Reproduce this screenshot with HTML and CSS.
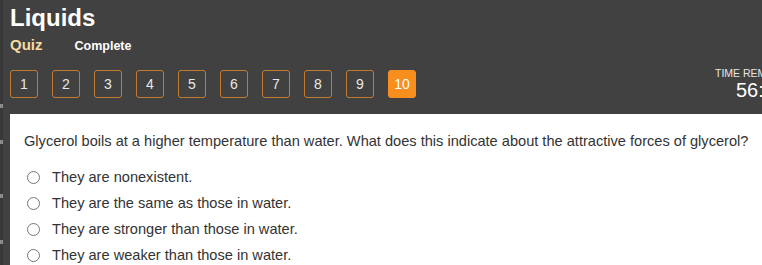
FILE: index.html
```html
<!DOCTYPE html>
<html lang="en">
<head>
    <meta charset="UTF-8">
    <title>Liquids - Quiz</title>
    <link rel="stylesheet" href="styles.css">
</head>
<body>
    <div class="edge">
        <span class="tick t1"></span>
        <span class="tick t2"></span>
        <span class="tick t3"></span>
        <span class="tick t4"></span>
    </div>
    <div class="page">
        <div class="header">
            <h1>Liquids</h1>
            <div class="subtitle">
                <span class="kind">Quiz</span>
                <span class="status">Complete</span>
            </div>
        </div>

        <div class="nav">
            <div class="questions">
                <button class="q-btn">1</button>
                <button class="q-btn">2</button>
                <button class="q-btn">3</button>
                <button class="q-btn">4</button>
                <button class="q-btn">5</button>
                <button class="q-btn">6</button>
                <button class="q-btn">7</button>
                <button class="q-btn">8</button>
                <button class="q-btn">9</button>
                <button class="q-btn active">10</button>
            </div>
            <div class="timer">
                <div class="timer-label">TIME REMAINING</div>
                <div class="timer-value">56:12</div>
            </div>
        </div>

        <div class="panel">
            <p class="question">Glycerol boils at a higher temperature than water. What does this indicate about the attractive forces of glycerol?</p>
            <ul class="answers">
                <li><span class="radio"></span>They are nonexistent.</li>
                <li><span class="radio"></span>They are the same as those in water.</li>
                <li><span class="radio"></span>They are stronger than those in water.</li>
                <li><span class="radio"></span>They are weaker than those in water.</li>
            </ul>
        </div>
    </div>
</body>
</html>
```

FILE: styles.css
```css
html, body {
    margin: 0;
    padding: 0;
    height: 100%;
    overflow: hidden;
}
body {
    background-color: #414141;
    font-family: "Liberation Sans", Arial, sans-serif;
    position: relative;
}
.edge {
    position: absolute;
    left: 0;
    top: 0;
    bottom: 0;
    width: 3px;
    background: #383838;
}
.tick {
    position: absolute;
    left: 0;
    width: 3px;
    height: 4px;
    background: #8a8a8a;
}
.t1 { top: 104px; }
.t2 { top: 140px; }
.t3 { top: 194px; }
.t4 { top: 240px; }
.page {
    padding-left: 10px;
    width: 800px;
}
.header h1 {
    margin: 0;
    padding-top: 4px;
    font-size: 24px;
    line-height: 27px;
    color: #ffffff;
    font-weight: bold;
}
.subtitle {
    margin-top: 5px;
    height: 20px;
    display: flex;
    align-items: baseline;
}
.kind {
    color: #f6dca3;
    font-weight: bold;
    font-size: 15px;
}
.status {
    color: #ffffff;
    font-weight: bold;
    font-size: 12.5px;
    margin-left: 32px;
}
.nav {
    display: flex;
    justify-content: space-between;
    margin-top: 14px;
    height: 44px;
}
.questions {
    display: flex;
    gap: 14px;
}
.q-btn {
    width: 28px;
    height: 28px;
    padding: 0;
    border: 1px solid #c07d32;
    border-radius: 3px;
    background: transparent;
    color: #e8e8e8;
    font-family: "Liberation Sans", Arial, sans-serif;
    font-size: 14px;
}
.q-btn.active {
    background: #f78e1e;
    border-color: #f78e1e;
    color: #ffffff;
}
.timer {
    margin-top: -3px;
    width: 95px;
    text-align: left;
}
.timer-label {
    color: #e6e6e6;
    font-size: 10.5px;
    line-height: 12px;
}
.timer-value {
    color: #ffffff;
    font-size: 20px;
    line-height: 22px;
    padding-left: 21px;
}
.panel {
    background: #ffffff;
    padding: 18px 14px 10px;
    height: 200px;
}
.question {
    margin: 0;
    font-size: 14.6px;
    line-height: 18px;
    color: #333333;
}
.answers {
    list-style: none;
    margin: 14px 0 0;
    padding: 0 0 0 3px;
}
.answers li {
    display: flex;
    align-items: center;
    height: 26px;
    font-size: 14.6px;
    color: #333333;
}
.radio {
    width: 11px;
    height: 11px;
    border: 1px solid #767676;
    border-radius: 50%;
    margin-right: 12px;
}
```
